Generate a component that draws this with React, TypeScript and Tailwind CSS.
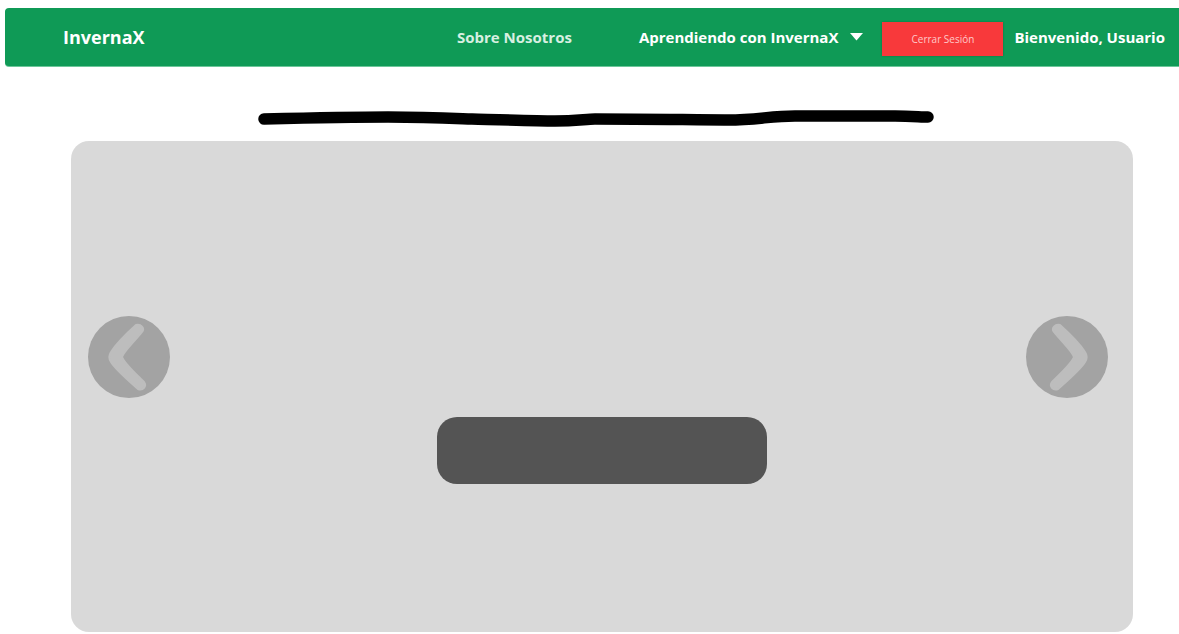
const font = { fontFamily: '"Open Sans", "Noto Sans", sans-serif' };

function Navbar() {
  return (
    <nav className="ml-[5px] mt-2 flex h-[58px] items-center rounded-l-[4px] bg-[#0f9a56] pl-[58px] pr-[14px] text-white shadow-[0_1px_0_#6cc79a]">
      <span className="text-[18px] font-bold">InvernaX</span>
      <div className="ml-auto flex items-center">
        <a className="text-[15px] font-bold text-[#d7f0e1]">Sobre Nosotros</a>
        <button className="ml-[67px] flex items-center text-[15px] font-bold">
          Aprendiendo con InvernaX
          <svg className="ml-[12px] h-[8px] w-[13px]" viewBox="0 0 13 8">
            <path d="M0 0 H13 L6.5 7.5 Z" fill="#ffffff" />
          </svg>
        </button>
        <button className="ml-[19px] mt-[4px] flex h-[34px] w-[121px] items-center justify-center bg-[#f8393b] text-[10px] text-[#ffc9c9] shadow-[0_0_2px_rgba(0,0,0,0.25)]">
          Cerrar Sesión
        </button>
        <span className="ml-[11px] text-[15px] font-bold">Bienvenido, Usuario</span>
      </div>
    </nav>
  );
}

// boomerang-style chevron inside a grey disc: thin tips, fat bend
function ArrowButton({ side }: { side: 'left' | 'right' }) {
  const d =
    side === 'left'
      ? 'M48 9 C53 8 57 12 54 16 C46 26 36 35 34 41 C36 47 47 57 56 66 C59 70 55 75 50 73 C41 65 27 53 23 46 C21 43 21 39 23 36 C28 28 38 18 48 9 Z'
      : 'M34 9 C29 8 25 12 28 16 C36 26 46 35 48 41 C46 47 35 57 26 66 C23 70 27 75 32 73 C41 65 55 53 59 46 C61 43 61 39 59 36 C54 28 44 18 34 9 Z';
  return (
    <button className="flex h-[82px] w-[82px] items-center justify-center rounded-full bg-[#a3a3a3]">
      <svg width="82" height="82" viewBox="0 0 82 82">
        <path d={d} fill="#bdbdbd" stroke="#bdbdbd" strokeWidth="2" strokeLinejoin="round" />
      </svg>
    </button>
  );
}

export default function App() {
  return (
    <div className="min-h-screen overflow-hidden bg-white" style={font}>
      <Navbar />

      <svg className="ml-[256px] mt-[42px] block" width="680" height="22" viewBox="0 0 680 22">
        <path
          d="M8 11 C50 10 100 9 132 9 C170 9 190 10 216 11 C250 12 280 13 299 13 C320 13 330 11 339 11 C400 11 440 12 472 12 C500 12 515 8 539 8 C580 8 620 8 639 8 C655 8 665 9 672 9"
          fill="none"
          stroke="#000"
          strokeWidth="11.5"
          strokeLinecap="round"
          strokeLinejoin="round"
        />
      </svg>

      <section className="ml-[71px] mt-[11px] flex h-[491px] w-[1062px] items-start rounded-[18px] bg-[#d9d9d9] pl-[17px] pr-[25px] pt-[175px]">
        <ArrowButton side="left" />
        <div className="flex flex-1 justify-center pl-[8px] pt-[101px]">
          <div className="h-[67px] w-[330px] rounded-[20px] bg-[#545454]" />
        </div>
        <ArrowButton side="right" />
      </section>
    </div>
  );
}
